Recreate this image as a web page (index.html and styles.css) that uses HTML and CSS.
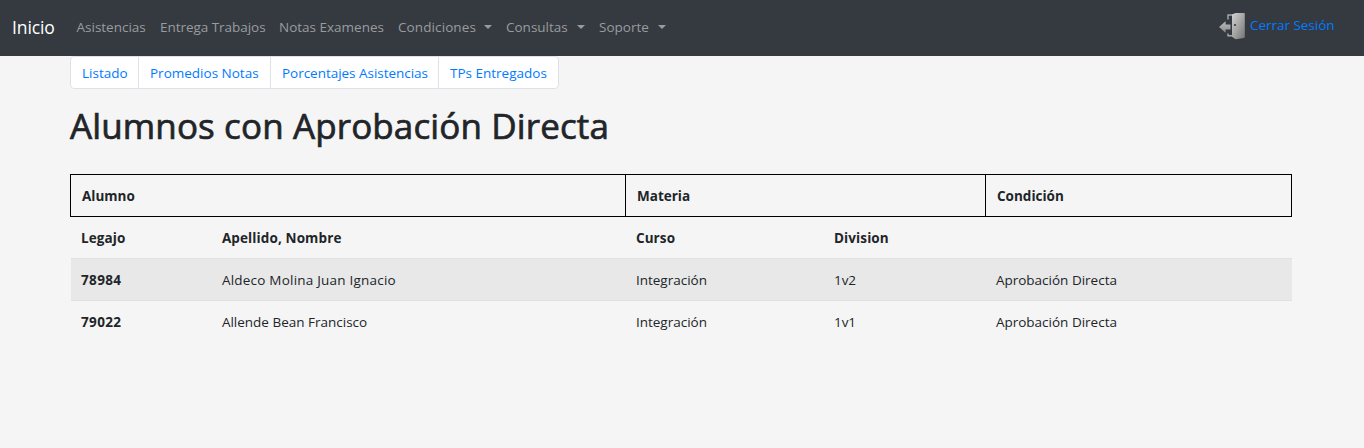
FILE: index.html
```html
<!DOCTYPE html>
<html lang="es">
<head>
<meta charset="utf-8">
<title>Alumnos con Aprobación Directa</title>
<link rel="stylesheet" href="styles.css">
</head>
<body>
<nav class="navbar">
  <a class="brand">Inicio</a>
  <ul class="menu">
    <li class="w-asis">Asistencias</li>
    <li class="w-entrega">Entrega Trabajos</li>
    <li class="w-notas">Notas Examenes</li>
    <li class="w-cond drop">Condiciones</li>
    <li class="w-cons drop">Consultas</li>
    <li class="w-sop drop">Soporte</li>
  </ul>
  <a class="logout">
    <svg class="door" width="28" height="28" viewBox="0 0 28 28">
      <defs>
        <linearGradient id="metal" x1="0" y1="0" x2="1" y2="1">
          <stop offset="0" stop-color="#d2d2d2"/><stop offset=".5" stop-color="#a5a5a5"/><stop offset="1" stop-color="#747474"/>
        </linearGradient>
        <linearGradient id="arrow" x1="0" y1="0" x2="0" y2="1">
          <stop offset="0" stop-color="#bcbcbc"/><stop offset="1" stop-color="#8b8b8b"/>
        </linearGradient>
      </defs>
      <path d="M10 7.500V3H15M10 21.500v2.300h4" fill="none" stroke="#a9a9a9" stroke-width="1.400"/>
      <path d="M14 2.500 17.500 1h8.500q.8 0 .8.800v23.200q0 .8-.8.900l-8.500 1.300-3.500-2.400Z" fill="url(#metal)"/>
      <path d="M1 15 7.600 9.200v3.300H12.500v5H7.600v3.300Z" fill="url(#arrow)"/>
      <circle cx="17" cy="13" r="1.100" fill="#3c3c3c"/>
    </svg>
    <span>Cerrar Sesión</span>
  </a>
</nav>
<main class="container">
  <div class="pages">
    <a class="p-list">Listado</a><a class="p-prom">Promedios Notas</a><a class="p-porc">Porcentajes Asistencias</a><a class="p-tps">TPs Entregados</a>
  </div>
  <h1>Alumnos con Aprobación Directa</h1>
  <table class="grades">
    <colgroup><col class="c1"><col class="c2"><col class="c3"><col class="c4"><col class="c5"></colgroup>
    <thead>
      <tr class="groups"><th colspan="2">Alumno</th><th colspan="2">Materia</th><th>Condición</th></tr>
    </thead>
    <tbody>
      <tr class="labels"><th>Legajo</th><th>Apellido, Nombre</th><th>Curso</th><th>Division</th><th></th></tr>
      <tr class="odd"><th>78984</th><td class="long">Aldeco Molina Juan Ignacio</td><td>Integración</td><td>1v2</td><td>Aprobación Directa</td></tr>
      <tr class="even"><th>79022</th><td>Allende Bean Francisco</td><td>Integración</td><td>1v1</td><td>Aprobación Directa</td></tr>
    </tbody>
  </table>
</main>
</body>
</html>
```
FILE: styles.css
```css
* { box-sizing: border-box; }
body {
  margin: 0;
  background: #f5f5f5;
  color: #212529;
  font: 14px/21px "Segoe UI", "Open Sans", "Noto Sans", sans-serif;
}
.navbar {
  display: flex;
  align-items: center;
  height: 56px;
  padding: 0 29px 2px 12px;
  background: #343a40;
}
.brand { width: 64.500px; color: #fff; font-size: 17.5px; letter-spacing: -.1px; }
.menu { display: flex; gap: 14px; margin: 0; padding: 0; list-style: none; font-size: 13.500px; color: #999c9f; white-space: nowrap; }
.w-asis { width: 69.500px; }
.w-entrega { width: 105px; letter-spacing: -.04px; }
.w-notas { width: 105px; }
.w-cond { width: 94px; letter-spacing: .1px; }
.w-cons { width: 79px; }
.w-sop { width: 67px; }
.drop { display: flex; justify-content: space-between; }
.drop::after {
  content: "";
  width: 0;
  margin-top: 8px;
  height: 0;
  border: 4.200px solid transparent;
  border-width: 4px 4.500px 0;
  border-top-color: #999c9f;
}
.logout { display: flex; align-items: center; gap: 4px; margin-left: auto; color: #007bff; font-size: 13.500px; white-space: nowrap; }
.logout span { width: 85px; margin-top: -4px; letter-spacing: -.03px; }
.door { margin-top: -3px; }
.container { width: 1222px; margin-left: 70px; }
.pages { display: flex; width: 489px; height: 33px; border: 1px solid #dee2e6; border-radius: 4px; background: #fff; color: #007bff; font-size: 13.500px; white-space: nowrap; }
.pages a { padding: 6px 0 0 11px; border-right: 1px solid #dee2e6; }
.pages .p-list { width: 68px; }
.pages .p-prom { width: 132px; }
.pages .p-porc { width: 168px; letter-spacing: -.03px; }
.pages .p-tps { border-right: 0; }
h1 { margin: 16px 0 27px; font-size: 35px; line-height: 42px; font-weight: 500; letter-spacing: .12px; -webkit-text-stroke: .7px #212529; white-space: nowrap; }
.grades { width: 1222px; border-collapse: collapse; table-layout: fixed; font-size: 13.500px; }
.c1 { width: 141px; }
.c2 { width: 414px; }
.c3 { width: 198px; }
.c4 { width: 162px; }
.grades th, .grades td { height: 42px; padding: 1px 11px 0 10.400px; text-align: left; }
.grades th { font-weight: 700; }
.grades .groups th { padding-left: 11px; border: 1px solid #000; }
.labels th { letter-spacing: .12px; }
.odd th, .even th { letter-spacing: .4px; }
.long { letter-spacing: .22px; }
.odd { background: #e8e8e8; }
.odd > *, .even > * { border-top: 1px solid #dee2e6; }
```
